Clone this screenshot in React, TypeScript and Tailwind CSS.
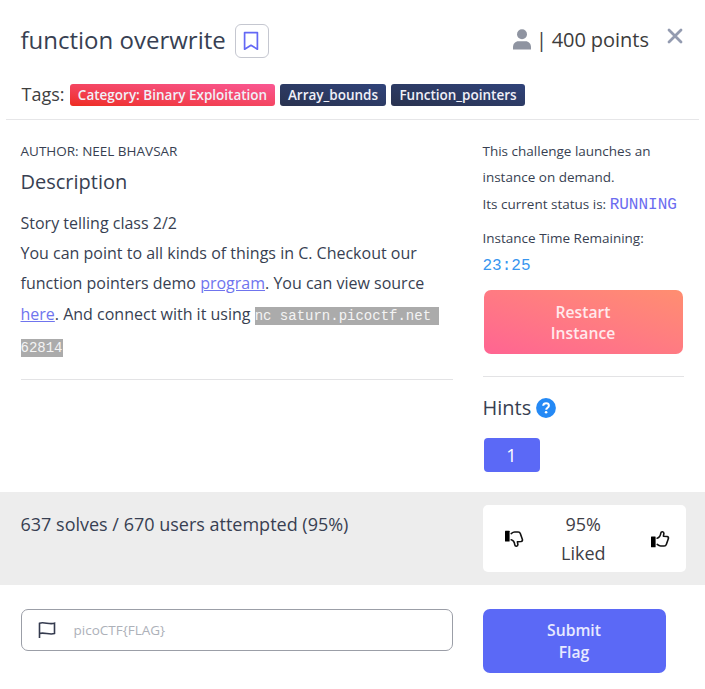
import React from "react";

const sans = "font-['Open_Sans','Noto_Sans',sans-serif]";
const mono = "font-['Liberation_Mono',monospace]";

function Thumb({ down = false }: { down?: boolean }) {
  return (
    <svg viewBox="0 0 20 18" className={down ? "h-[18px] w-5 -scale-y-100" : "h-[18px] w-5"} fill="none">
      <rect x="1" y="6.6" width="4.6" height="10.6" rx="0.5" fill="#000" />
      <path
        d="M7.2 8.2C9.6 7.600 10.400 6.200 10.800 3.200C11.100 1.200 13.900 1.300 13.900 3.400L13.400 6.200L17 6.500C18.300 6.700 18.700 7.500 18.400 8.600L16.400 14.300C16 15.500 15.300 16 14.200 16H10.600C9.200 16 8.300 15.300 7.200 14.400"
        stroke="#111"
        strokeWidth="1.6"
        strokeLinejoin="round"
        strokeLinecap="round"
      />
    </svg>
  );
}

function Header() {
  return (
    <header className="mx-1.5 h-[120px] border-b border-[#e6e6e8] pl-[14.5px]">
      <div className="flex h-[58px] items-end">
        <h1 className="h-[37px] w-[205px] whitespace-nowrap text-[24px] leading-[37px]">function overwrite</h1>
        <button className="ml-[9px] flex size-[34px] items-center justify-center rounded-[6px] border border-[#c5c7d0]">
          <svg viewBox="0 0 16 20" className="mr-px h-5 w-4" fill="none" stroke="#6468f5" strokeWidth="1.7" strokeLinejoin="round">
            <path d="M1.6 1.6h12.8v16.6L8 14.3l-6.4 3.9z" />
          </svg>
        </button>
        <div className="ml-auto flex h-[37px] items-center">
          <svg viewBox="0 0 18 21" className="mb-px h-[21px] w-[18px]" fill="#8f94a1">
            <circle cx="9" cy="5.2" r="5" />
            <path d="M0 20.500v-2.300c0-3.400 2.300-5.900 5.500-5.900h7c3.200 0 5.500 2.500 5.500 5.900v2.300z" />
          </svg>
          <span className="ml-[5px] w-[114px] whitespace-nowrap text-[20px] text-[#3c3c3c] [word-spacing:-0.5px]">| 400 points</span>
          <svg viewBox="0 0 16 16" className="mr-[16px] mb-[7px] ml-[17px] size-4" stroke="#939bb0" strokeWidth="2.8" strokeLinecap="round">
            <path d="M2 2l12 12M14 2L2 14" />
          </svg>
        </div>
      </div>
      <div className="mt-[25px] flex h-[24px] items-center text-[13.500px] font-semibold leading-[22px] text-[#f0f0f8]">
        <span className="w-[49.500px] whitespace-nowrap pb-[2px] pl-px text-[18px] font-normal text-[#3f3f3f]">Tags:</span>
        <span className="flex h-[22px] w-[205px] items-center justify-center whitespace-nowrap rounded-[3px] bg-linear-to-tr from-[#ee2b1c] to-[#fa5793]">Category: Binary Exploitation</span>
        <span className="ml-[5px] flex h-[22px] w-[106px] items-center justify-center whitespace-nowrap rounded-[3px] bg-linear-to-tr from-[#29324f] to-[#30437a]">Array_bounds</span>
        <span className="ml-[5px] flex h-[22px] w-[134px] items-center justify-center whitespace-nowrap rounded-[3px] bg-linear-to-tr from-[#29324f] to-[#30437a]">Function_pointers</span>
      </div>
    </header>
  );
}

function Details() {
  return (
    <section className="w-[432px] whitespace-nowrap">
      <p className="mt-[21px] text-[13.500px] leading-5">AUTHOR: NEEL BHAVSAR</p>
      <h2 className="mt-[7px] text-[20px] leading-[28px]">Description</h2>
      <div className="mt-[12px] h-[172px] border-b border-[#e3e3e5] text-[16px] leading-[30.2px]">
        Story telling class 2/2
        <br />
        You can point to all kinds of things in C. Checkout our
        <br />
        function pointers demo <a className="text-[#6f74ee] underline">program</a>. You can view source
        <br />
        <a className="text-[#6f74ee] underline">here</a>. And connect with it using{" "}
        <code className={`${mono} whitespace-pre bg-[#ababab] py-px text-[14px] text-[#f4f4f4]`}>nc saturn.picoctf.net </code>
        <br />
        <code className={`${mono} bg-[#ababab] py-px text-[14px] text-[#f4f4f4]`}>62814</code>
      </div>
    </section>
  );
}

function Instance() {
  return (
    <aside className="ml-[30px] w-[201px] whitespace-nowrap">
      <div className="mt-[18px] text-[13.500px] leading-[26px]">
        <p>This challenge launches an</p>
        <p>instance on demand.</p>
        <p className="mt-px">Its current status is: <span className={`${mono} text-[16px] text-[#6b6cf0]`}>RUNNING</span></p>
        <p className="mt-[7px]">Instance Time Remaining:</p>
        <p className={`${mono} mt-[2px] text-[16px] text-[#3896ef]`}>23:25</p>
      </div>
      <button className="mt-[11px] ml-px block h-[64px] w-[199px] rounded-[7px] bg-linear-to-tr from-[#ff6492] to-[#ff8e70] pt-px text-[15.700px] font-semibold leading-[21px] text-[#ffe9ec]">
        Restart<br />Instance
      </button>
      <div className="mt-[22px] border-t border-[#e3e3e5]" />
      <h3 className="mt-[16px] flex h-[30px] items-center text-[20px]">
        Hints
        <svg viewBox="0 0 20 20" className="ml-[5px] size-5">
          <circle cx="10" cy="10" r="9.9" fill="#2489f5" />
          <path d="M7.2 7.8C7.4 4.5 12.9 4.600 12.900 7.700c0 2-2.700 2-2.700 4" fill="none" stroke="#fff" strokeWidth="2" />
          <circle cx="10.1" cy="14.2" r="1.3" fill="#fff" />
        </svg>
      </h3>
      <button className="mt-[15px] ml-px block h-[34px] w-[56px] rounded-[4px] bg-[#5b69f6] text-[18px] text-white">1</button>
    </aside>
  );
}

export default function App() {
  return (
    <main className={`${sans} h-[689px] w-[705px] overflow-hidden bg-white text-[#383f52]`}>
      <Header />
      <div className="flex h-[372px] pl-[20.500px]">
        <Details />
        <Instance />
      </div>
      <div className="flex h-[93px] bg-[#ededed] pl-[20.500px] pt-[13px]">
        <p className="w-[462px] pt-[5px] text-[18px] leading-[29px]">637 solves / 670 users attempted (95%)</p>
        <div className="flex h-[67px] w-[203px] items-center justify-between rounded-[5px] bg-white pr-[16px] pl-[21.500px] text-center text-[18px] leading-[29px] text-[#3f4046]">
          <Thumb down />
          <p className="mr-[7px]">95%<br />Liked</p>
          <Thumb />
        </div>
      </div>
      <div className="flex items-start pt-[24px] pl-[20.500px]">
        <div className="flex h-[42px] w-[432px] items-center rounded-[7px] border border-[#9b9ea7] pl-[16.500px] text-[13.500px] text-[#adb1b9]">
          <svg viewBox="0 0 18 18" className="size-[18px]" fill="none" stroke="#343a4e" strokeWidth="1.6">
            <path d="M1.500 17V2.200C6 .600 11.500 3.900 16.500 2.200v10.300C11.500 14.200 6 10.900 1.500 12.500" />
          </svg>
          <span className="ml-[17.500px] pt-px">picoCTF{"{FLAG}"}</span>
        </div>
        <button className="ml-[30px] h-[64px] w-[183px] rounded-[7px] bg-[#5b69f6] text-[15.700px] font-semibold leading-[22px] text-[#e8eaff]">
          Submit<br />Flag
        </button>
      </div>
    </main>
  );
}
